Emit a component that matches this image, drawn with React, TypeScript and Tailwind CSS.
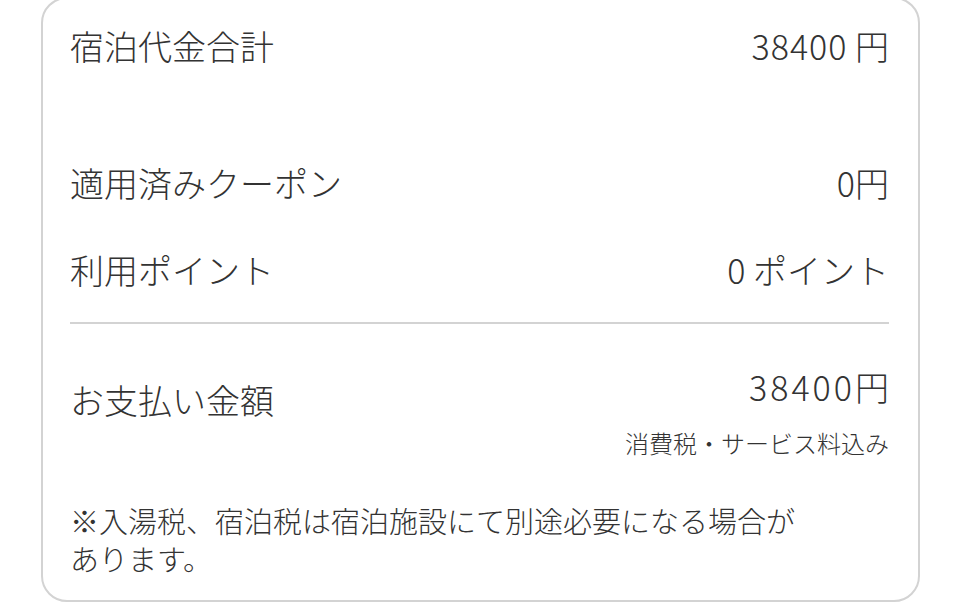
import React from "react";

export default function App() {
  const font = { fontFamily: '"Noto Sans CJK JP", "Noto Sans", sans-serif' };
  return (
    <div className="w-[959px] h-[603px] bg-white overflow-hidden" style={font}>
      <div className="ml-[41px] mt-[-3px] w-[879px] h-[605px] border-2 border-[#d3d3d3] rounded-[26px] pl-[27px] pr-[29px] text-[#333333] font-light flex flex-col">
        <div className="mt-[25px] h-[44px] flex items-center justify-between text-[34px] leading-[44px]">
          <span>宿泊代金合計</span>
          <span>
            <span className="tracking-[1px]">38400</span> 円
          </span>
        </div>
        <div className="mt-[93px] h-[44px] flex items-center justify-between text-[34px] leading-[44px]">
          <span>適用済みクーポン</span>
          <span>0円</span>
        </div>
        <div className="mt-[43px] h-[44px] flex items-center justify-between text-[34px] leading-[44px]">
          <span>利用ポイント</span>
          <span>0 ポイント</span>
        </div>
        <div className="mt-[30px] h-[2px] bg-[#d3d3d3]" />
        <div className="mt-[41px] flex items-start justify-between">
          <div className="mt-[13px] text-[34px] leading-[44px]">お支払い金額</div>
          <div className="flex flex-col items-end">
            <div className="text-[34px] leading-[44px]">
              <span className="tracking-[3px]">38400</span>円
            </div>
            <div className="mt-[18px] text-[24px] leading-[32px]">消費税・サービス料込み</div>
          </div>
        </div>
        <div className="mt-[42px] w-[745px] text-[29px] leading-[38px]">
          ※入湯税、宿泊税は宿泊施設にて別途必要になる場合があります。
        </div>
      </div>
    </div>
  );
}
